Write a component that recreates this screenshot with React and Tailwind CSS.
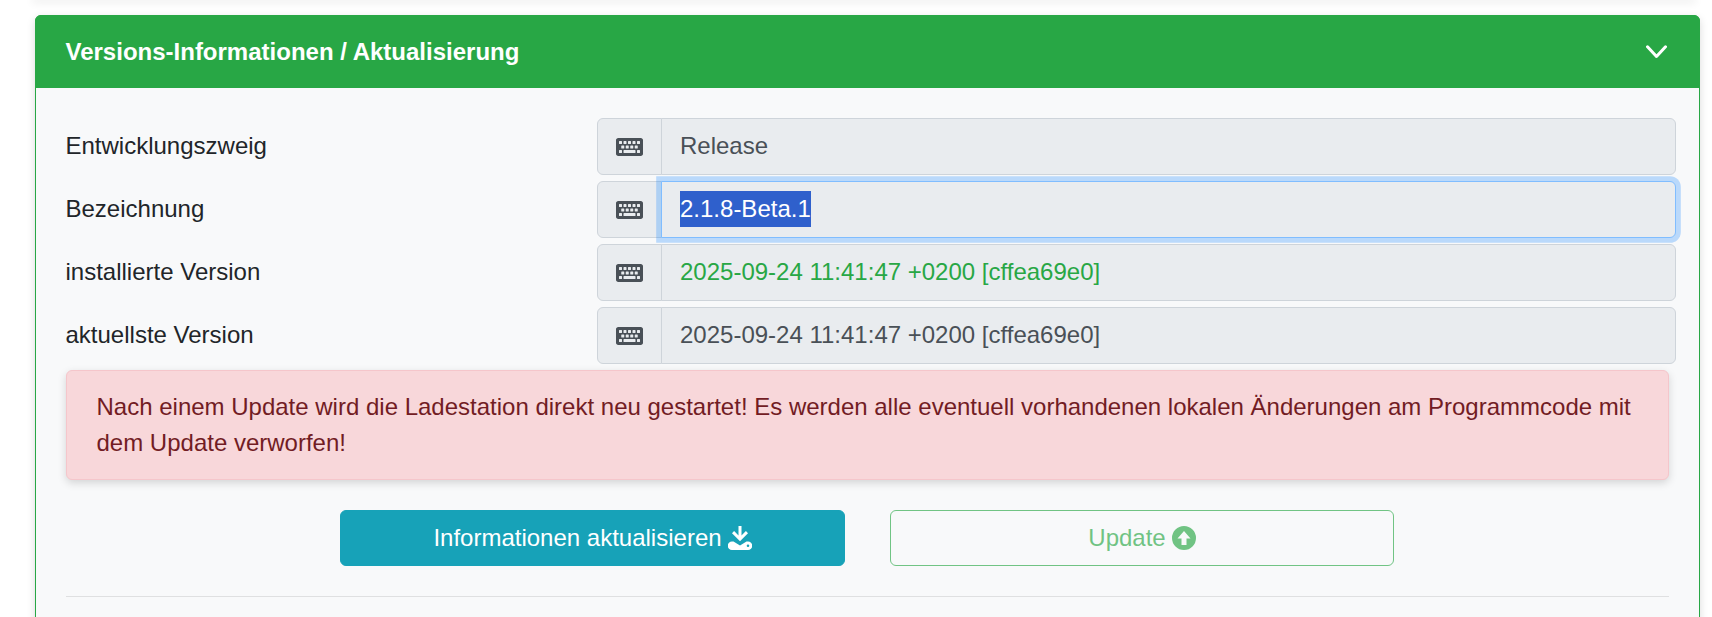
import React from "react";
import { FaKeyboard } from "react-icons/fa";

const rows = [
  { label: "Entwicklungszweig", value: "Release" },
  { label: "Bezeichnung", value: "2.1.8-Beta.1", focused: true },
  { label: "installierte Version", value: "2025-09-24 11:41:47 +0200 [cffea69e0]", success: true },
  { label: "aktuellste Version", value: "2025-09-24 11:41:47 +0200 [cffea69e0]" },
];

function InfoRow({ label, value, focused, success }) {
  return (
    <div className="flex items-center h-[57px] -mr-[7px]">
      <label className="w-[531px] shrink-0 -ml-[0.5px] pb-[2px] text-[#212529]">{label}</label>
      <div className="flex flex-1 h-full ml-[0.5px]">
        <div className="flex items-center justify-center w-[65px] shrink-0 bg-[#e9ecef] border border-[#ced4da] rounded-l-[6px] text-[#495057]">
          <FaKeyboard className="w-[27px] h-[24px]" />
        </div>
        {focused ? (
          <div className="relative z-10 -ml-px flex flex-1 items-center pl-[18px] pb-[2px] bg-[#e9ecef] border border-[#80bdff] rounded-r-[6px] shadow-[0_0_0_4.8px_rgba(0,123,255,0.25)]">
            <span className="bg-[#2f60cc] text-white">{value}</span>
          </div>
        ) : (
          <div className={`-ml-px flex flex-1 items-center pl-[18px] pb-[2px] bg-[#e9ecef] border border-[#ced4da] rounded-r-[6px] ${success ? "text-[#28a745]" : "text-[#495057]"}`}>
            {value}
          </div>
        )}
      </div>
    </div>
  );
}

// Download-Symbol: Pfeil ueber der abgerundeten Ablage
function DownloadIcon() {
  return (
    <svg className="w-[24px] h-[24px]" viewBox="0 0 24 24" fill="currentColor">
      <path d="M10.5 0h3v9.5l4.400-4.400 2.100 2.100-8 8-8-8 2.100-2.100 4.400 4.400z" />
      <path fillRule="evenodd" d="M4 15.500h1.500l6.500 4 6.500-4H20a4 4 0 0 1 0 8.500H4a4 4 0 0 1 0-8.500zM20 18.500a1.300 1.300 0 1 0 0 2.600 1.300 1.300 0 0 0 0-2.600z" />
    </svg>
  );
}

// Kreis mit ausgespartem Pfeil, damit der Hintergrund durchscheint
function UpdateIcon() {
  return (
    <svg className="w-[24px] h-[24px]" viewBox="0 0 24 24" fill="currentColor">
      <path fillRule="evenodd" d="M12 0a12 12 0 1 1 0 24 12 12 0 0 1 0-24zM12 5 5.500 12.500H9.500V19H14.500V12.500H18.500z" />
    </svg>
  );
}

export default function App() {
  return (
    <div className="h-screen overflow-hidden bg-white pl-[35px] pr-[12px] text-[24px] leading-[36px] font-['Liberation_Sans',Arial,sans-serif]">
      <div className="h-0 mr-[7px] shadow-[0_0_9px_3px_rgba(0,0,0,0.07)]" />
      <div className="mt-[15px] rounded-[6px] border border-[#28a745] bg-[#f8f9fa] shadow-[0_3px_9px_rgba(0,0,0,0.15)]">
        <div className="flex items-center justify-between h-[73px] -m-px mb-0 pl-[30.5px] pr-[33px] bg-[#28a745] rounded-t-[6px] text-white font-bold">
          <span>Versions-Informationen / Aktualisierung</span>
          <svg className="w-[21px] h-[14px]" viewBox="0 0 21 14" fill="none" stroke="white" strokeWidth="3" strokeLinecap="round" strokeLinejoin="round">
            <path d="M1.500 1.800 10.500 11.500 19.500 1.800" />
          </svg>
        </div>
        <div className="px-[30px] pt-[30px]">
          <div className="flex flex-col gap-[6px]">
            {rows.map((row) => (
              <InfoRow key={row.label} {...row} />
            ))}
          </div>
          <div className="mt-[6px] pl-[29.5px] pr-[30px] py-[18px] bg-[#f8d7da] border border-[#f5c6cb] rounded-[6px] text-[#721c24] shadow-[0_3px_9px_rgba(0,0,0,0.15)]">
            Nach einem Update wird die Ladestation direkt neu gestartet! Es werden alle eventuell vorhandenen lokalen Änderungen am Programmcode mit dem Update verworfen!
          </div>
          <div className="flex justify-center gap-[45px] mt-[30px] pr-px">
            <button className="flex items-center justify-center gap-[6px] w-[505px] h-[56px] bg-[#17a2b8] border border-[#17a2b8] rounded-[6px] text-white">
              Informationen aktualisieren
              <DownloadIcon />
            </button>
            <button className="flex items-center justify-center gap-[6px] w-[504px] h-[56px] border border-[#28a745] rounded-[6px] text-[#28a745] opacity-65">
              Update
              <UpdateIcon />
            </button>
          </div>
          <hr className="mt-[30px] border-[#dfe0e1]" />
          <div className="h-[60px]" />
        </div>
      </div>
    </div>
  );
}
